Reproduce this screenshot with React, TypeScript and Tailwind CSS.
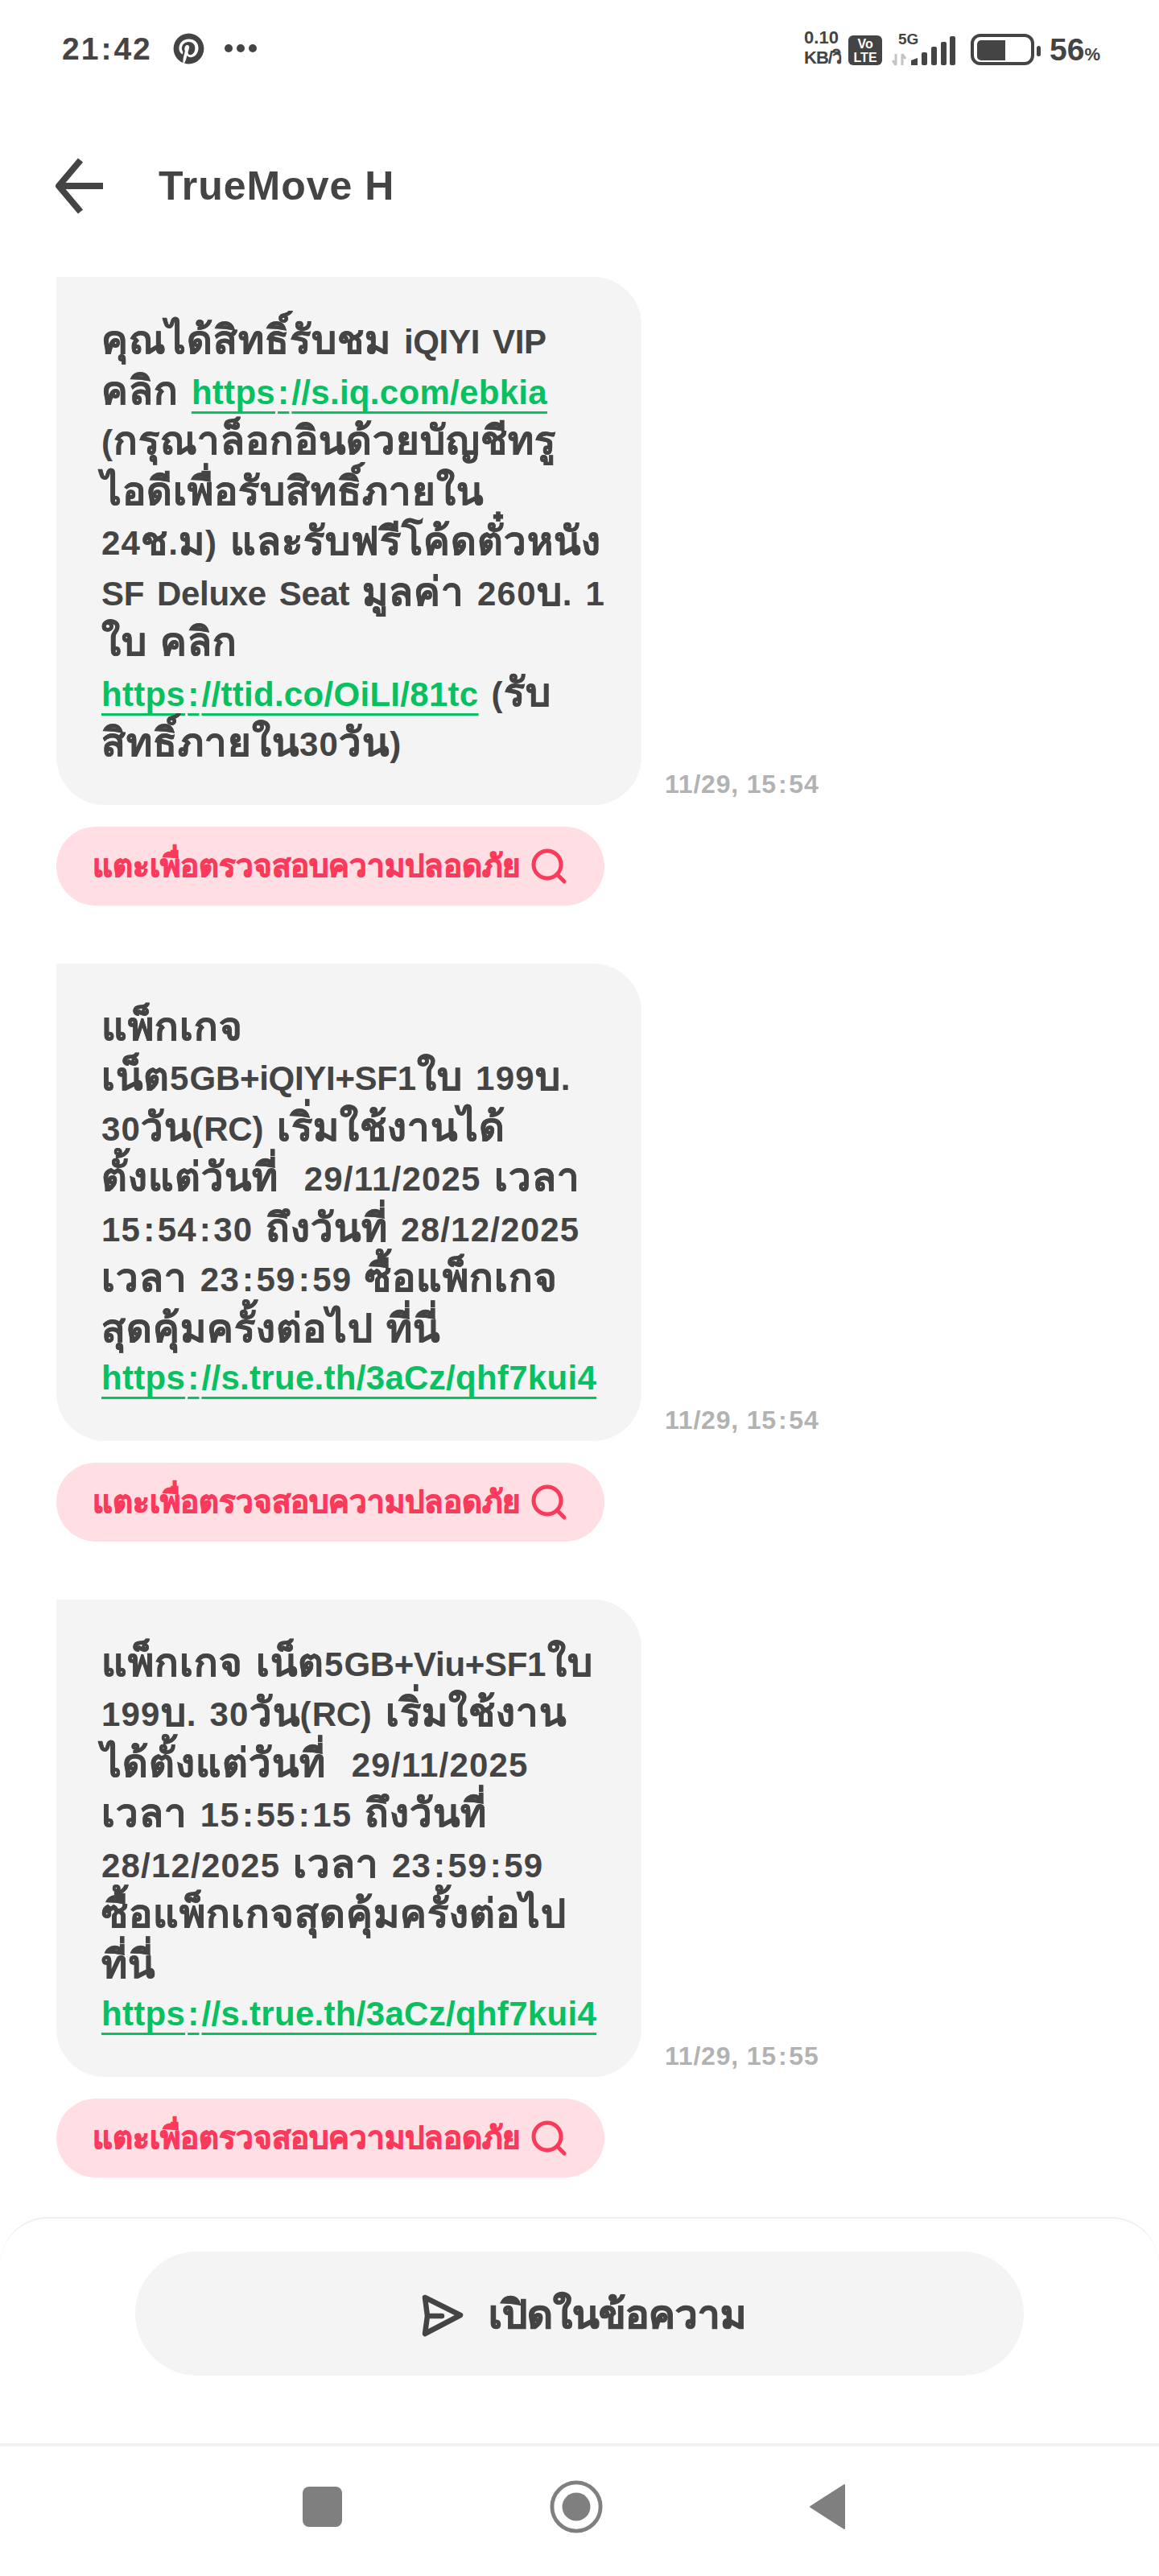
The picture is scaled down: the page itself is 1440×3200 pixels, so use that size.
import { FaPinterest } from "react-icons/fa";

// Thai runs sit larger than Latin runs in this screenshot's system font; colons are spaced out.
function T({ text }: { text: string }) {
  return (
    <>
      {text.split(/([\u0E00-\u0E7F]+|[A-Za-z+]+|:)/).map((part, i) => {
        if (/[\u0E00-\u0E7F]/.test(part)) return <span key={i} className="text-[49px] tracking-[1px] [-webkit-text-stroke:0.5px_#444]">{part}</span>;
        if (/[A-Za-z+]/.test(part)) return <span key={i} className="tracking-[-0.3px]">{part}</span>;
        if (part === ":") return <span key={i} className="px-[3px]">{part}</span>;
        return <span key={i} className="tracking-[1.2px]">{part}</span>;
      })}
    </>
  );
}

function Spaced({ text, gap }: { text: string; gap: string }) {
  const [a, b] = text.split(":");
  return <>{a}<span className={gap}>:</span>{b}</>;
}

const Line = ({ children }: { children: React.ReactNode }) => <div className="h-[62.5px] leading-[62.5px] whitespace-pre">{children}</div>;
const A = ({ href }: { href: string }) => (
  <span className="text-[#07c160] tracking-[0.3px] underline decoration-[3px] underline-offset-[9px] [text-decoration-skip-ink:none]">
    <Spaced text={href} gap="px-[3px]" />
  </span>
);

function Search() {
  return (
    <svg width="46" height="46" viewBox="0 0 46 46" fill="none" stroke="#fb3a5b" strokeWidth="5" strokeLinecap="round">
      <circle cx="21" cy="21" r="17" />
      <path d="M33 33 L42 42" />
    </svg>
  );
}

function Message({ lines, time }: { lines: React.ReactNode[]; time: string }) {
  return (
    <div className="flex flex-col items-start">
      <div className="flex items-end">
        <div className="w-[727px] rounded-tl-none rounded-tr-[60px] rounded-b-[60px] bg-[#f4f4f4] pl-[56px] pt-[47px] pb-[46px] text-[42px] font-bold text-[#444444] tracking-[0.5px] [word-spacing:3px]">
          {lines.map((l, i) => <Line key={i}>{typeof l === "string" ? <T text={l} /> : l}</Line>)}
        </div>
        <div className="ml-[29px] mb-[8px] text-[32px] font-bold text-[#b2b2b2] leading-[36px] tracking-[0.8px]">
          <Spaced text={time} gap="px-[2px]" />
        </div>
      </div>
      <div className="mt-[27px] flex h-[98px] w-[681px] items-center gap-[12px] rounded-full bg-[#ffdfe3] pl-[45px] text-[38.5px] font-bold text-[#fb3a5b]">
        <span className="[-webkit-text-stroke:1px_#fb3a5b]">แตะเพื่อตรวจสอบความปลอดภัย</span>
        <Search />
      </div>
    </div>
  );
}

export default function App() {
  return (
    <div className="relative flex h-[3200px] w-[1440px] flex-col overflow-hidden bg-white text-[#444444]" style={{ fontFamily: '"Liberation Sans","Noto Sans","Noto Sans CJK SC",sans-serif' }}>
      <div className="flex h-[120px] shrink-0 justify-between pl-[77px] pr-[73px]">
        <div className="flex items-center">
          <span className="text-[39px] font-bold tracking-[2px] leading-none"><Spaced text="21:42" gap="px-[1px]" /></span>
          <FaPinterest className="ml-[26px] text-[39px] text-[#444]" />
          <div className="ml-[25px] flex gap-[5px]">
            <span className="h-[10px] w-[10px] rounded-full bg-[#444]" />
            <span className="h-[10px] w-[10px] rounded-full bg-[#444]" />
            <span className="h-[10px] w-[10px] rounded-full bg-[#444]" />
          </div>
        </div>
        <div className="mt-[34px] flex items-start">
          <div className="w-[45px] text-[22px] font-bold leading-[25px]">
            <div>0.10</div>
            <div className="tracking-[-1px] whitespace-nowrap">KB/วิ</div>
          </div>
          <div className="ml-[10px] mt-[10px] flex h-[37px] w-[42px] flex-col items-center justify-center rounded-[6px] bg-[#444] text-[16px] font-bold leading-[17px] text-white">
            <div>Vo</div>
            <div>LTE</div>
          </div>
          <svg className="ml-[12px]" width="80" height="48" viewBox="0 -6 80 48">
            <text x="8" y="15" fontSize="19" fontWeight="700" fill="#444">5G</text>
            <path d="M5 27 V41 M1 35 L5 41 M13 41 V27 M13 27 L17 33" stroke="#c4c4c4" strokeWidth="3" fill="none" />
            <path d="M24 35 L32 32 V41 H24 Z" fill="#444" />
            <rect x="37" y="25" width="7" height="16" rx="2" fill="#444" />
            <rect x="49" y="18" width="7" height="23" rx="2" fill="#444" />
            <rect x="61" y="12" width="7" height="29" rx="2" fill="#444" />
            <rect x="72" y="5" width="7" height="36" rx="2" fill="#444" />
          </svg>
          <svg className="ml-[18px] mt-[8px]" width="88" height="40" viewBox="0 0 88 40">
            <rect x="2" y="2" width="75" height="35" rx="10" fill="none" stroke="#444" strokeWidth="4" />
            <path d="M8 13a5 5 0 0 1 5-5h30v25H13a5 5 0 0 1-5-5z" fill="#444" />
            <rect x="82" y="15" width="5" height="13" rx="2.500" fill="#444" />
          </svg>
          <span className="ml-[10px] mt-[8px] text-[39px] font-bold leading-none whitespace-nowrap">56<span className="text-[22px]">%</span></span>
        </div>
      </div>

      <div className="flex h-[224px] shrink-0 items-start pl-[68px] pt-[76px]">
        <svg width="62" height="70" viewBox="0 0 62 70" fill="none" stroke="#444" strokeWidth="8" strokeLinejoin="round">
          <path d="M32 3 L5 35 L32 67 M5 35 H60" />
        </svg>
        <span className="ml-[67px] mt-[5px] text-[50px] font-bold leading-[60px] tracking-[1px]">TrueMove H</span>
      </div>

      <div className="flex flex-1 flex-col gap-[72px] pl-[70px]">
        <Message time="11/29, 15:54" lines={[
          "คุณได้สิทธิ์รับชม iQIYI VIP",
          <><T text="คลิก " /><A href="https://s.iq.com/ebkia" /></>,
          "(กรุณาล็อกอินด้วยบัญชีทรู",
          "ไอดีเพื่อรับสิทธิ์ภายใน",
          "24ช.ม) และรับฟรีโค้ดตั๋วหนัง",
          "SF Deluxe Seat มูลค่า 260บ. 1",
          "ใบ คลิก",
          <><A href="https://ttid.co/OiLI/81tc" /><T text=" (รับ" /></>,
          "สิทธิ์ภายใน30วัน)",
        ]} />
        <Message time="11/29, 15:54" lines={[
          "แพ็กเกจ",
          "เน็ต5GB+iQIYI+SF1ใบ 199บ.",
          "30วัน(RC) เริ่มใช้งานได้",
          "ตั้งแต่วันที่  29/11/2025 เวลา",
          "15:54:30 ถึงวันที่ 28/12/2025",
          "เวลา 23:59:59 ซื้อแพ็กเกจ",
          "สุดคุ้มครั้งต่อไป ที่นี่",
          <A href="https://s.true.th/3aCz/qhf7kui4" />,
        ]} />
        <Message time="11/29, 15:55" lines={[
          "แพ็กเกจ เน็ต5GB+Viu+SF1ใบ",
          "199บ. 30วัน(RC) เริ่มใช้งาน",
          "ได้ตั้งแต่วันที่  29/11/2025",
          "เวลา 15:55:15 ถึงวันที่",
          "28/12/2025 เวลา 23:59:59",
          "ซื้อแพ็กเกจสุดคุ้มครั้งต่อไป",
          "ที่นี่",
          <A href="https://s.true.th/3aCz/qhf7kui4" />,
        ]} />
      </div>

      <div className="flex h-[281px] shrink-0 justify-center rounded-t-[60px] border-t-2 border-[#efefef] bg-white pt-[41px]">
        <div className="flex h-[154px] w-[1104px] items-center justify-center gap-[30px] rounded-full bg-[#f4f4f4] pl-[10px] pt-[4px]">
          <svg width="54" height="56" viewBox="0 0 54 56" fill="none" stroke="#444" strokeWidth="6.500" strokeLinejoin="round" strokeLinecap="round">
            <path d="M5 6 L49 28 L5 51 L8 29 Z M8 29 H26" />
          </svg>
          <span className="text-[49px] font-bold [-webkit-text-stroke:1.2px_#444]">เปิดในข้อความ</span>
        </div>
      </div>

      <div className="flex h-[165px] shrink-0 items-center border-t-[4px] border-[#f1f1f1] pb-[12px] pl-[376px]">
        <div className="h-[50px] w-[49px] rounded-[8px] bg-[#7f7f7f]" />
        <svg className="ml-[258px]" width="66" height="68" viewBox="0 0 68 68">
          <circle cx="34" cy="34" r="31" fill="none" stroke="#7f7f7f" strokeWidth="5" />
          <circle cx="34" cy="34" r="18" fill="#7f7f7f" />
        </svg>
        <svg className="ml-[256px]" width="46" height="58" viewBox="0 0 46 58">
          <path d="M44 2 V56 L2 29 Z" fill="#7f7f7f" stroke="#7f7f7f" strokeWidth="2" strokeLinejoin="round" />
        </svg>
      </div>
    </div>
  );
}
